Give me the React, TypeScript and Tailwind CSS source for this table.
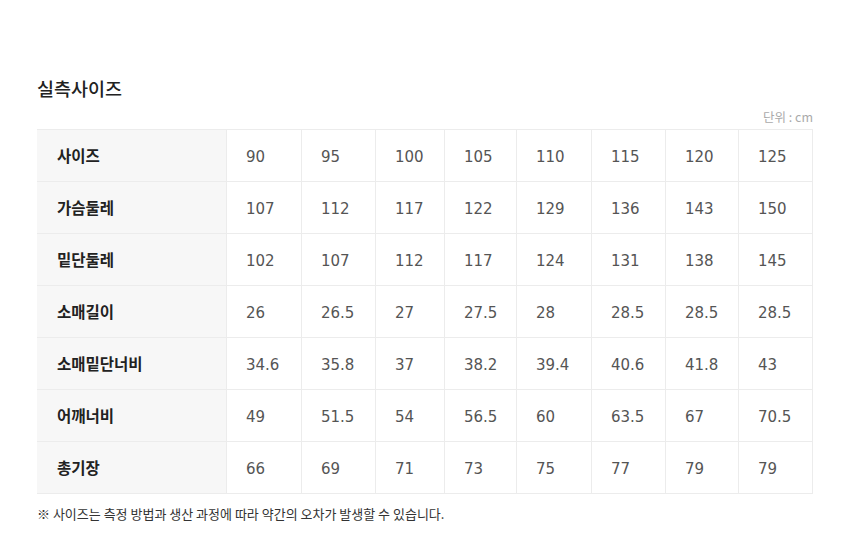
const sizes = ["90", "95", "100", "105", "110", "115", "120", "125"];

const rows: { label: string; values: string[] }[] = [
  { label: "가슴둘레", values: ["107", "112", "117", "122", "129", "136", "143", "150"] },
  { label: "밑단둘레", values: ["102", "107", "112", "117", "124", "131", "138", "145"] },
  { label: "소매길이", values: ["26", "26.5", "27", "27.5", "28", "28.5", "28.5", "28.5"] },
  { label: "소매밑단너비", values: ["34.6", "35.8", "37", "38.2", "39.4", "40.6", "41.8", "43"] },
  { label: "어깨너비", values: ["49", "51.5", "54", "56.5", "60", "63.5", "67", "70.5"] },
  { label: "총기장", values: ["66", "69", "71", "73", "75", "77", "79", "79"] },
];

function Row({ label, values }: { label: string; values: string[] }) {
  return (
    <div className="grid h-[52px] grid-cols-[190px_75px_74px_69px_72px_75px_74px_73px_74px] border-b border-[#ececec]">
      <div className="flex items-center border-r border-[#ececec] bg-[#f7f7f7] pl-[20px] text-[15.5px] font-bold text-[#222]">
        {label}
      </div>
      {values.map((v, i) => (
        <div
          key={i}
          className="flex items-center border-r border-[#ececec] pt-[3px] pl-[19px] font-['DejaVu_Sans',sans-serif] text-[15px] text-[#555] last:border-r-0"
        >
          {v}
        </div>
      ))}
    </div>
  );
}

export default function App() {
  return (
    <div className="h-[556px] w-[850px] bg-white px-[37px] pt-[76px] font-['Noto_Sans_CJK_KR','Noto_Sans',sans-serif]">
      <h2 className="text-[18.5px] leading-[24px] font-medium text-[#222]">실측사이즈</h2>
      <p className="mt-[9px] mb-[4px] text-right text-[12.5px] leading-[16px] text-[#aaa]">단위 : cm</p>

      <div className="w-[776px] border-t border-r border-[#ececec]">
        <Row label="사이즈" values={sizes} />
        {rows.map((r) => (
          <Row key={r.label} label={r.label} values={r.values} />
        ))}
      </div>

      <p className="mt-[12px] text-[13px] leading-[16px] text-[#333]">
        ※ 사이즈는 측정 방법과 생산 과정에 따라 약간의 오차가 발생할 수 있습니다.
      </p>
    </div>
  );
}
